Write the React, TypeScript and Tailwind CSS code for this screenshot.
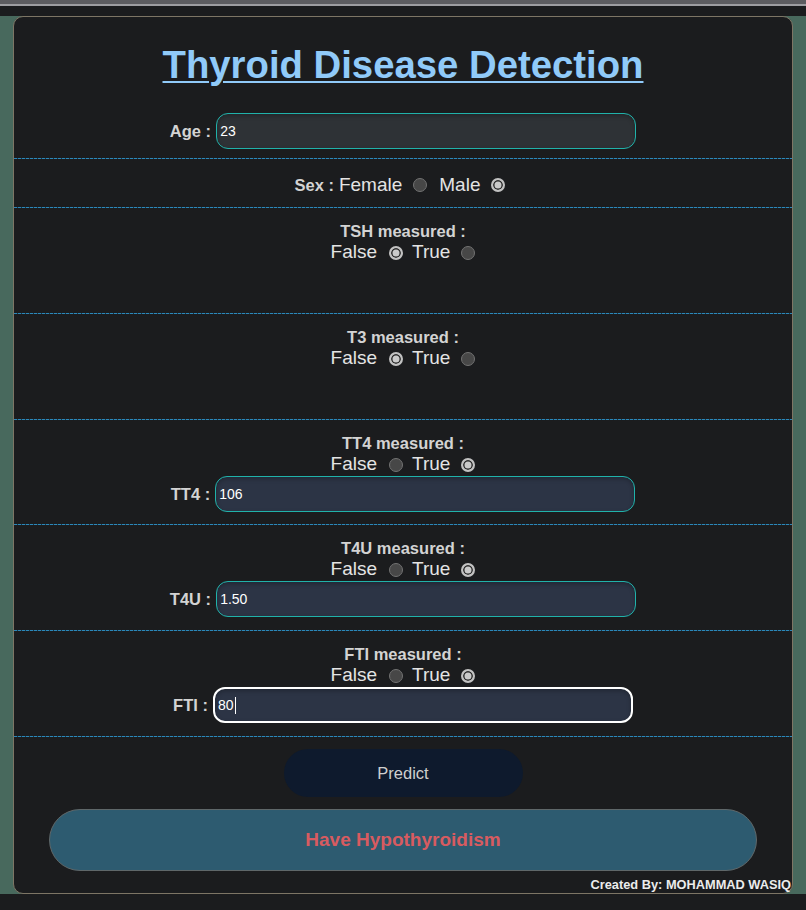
const font = { fontFamily: '"Liberation Sans", Arial, sans-serif' };

function Sep() {
  return <div className="h-[1px] shrink-0 bg-[repeating-linear-gradient(90deg,#2b88ba_0px,#2b88ba_3px,#1b3a4c_3px,#1b3a4c_4px)]" />;
}

function Radio({ checked }: { checked?: boolean }) {
  if (checked) {
    return (
      <span className="inline-block w-[14px] h-[14px] rounded-full border-2 border-[#c2c2c2] bg-[#cacaca] shadow-[inset_0_0_0_1.5px_#2b2b2b]" />
    );
  }
  return <span className="inline-block w-[14px] h-[14px] rounded-full border border-[#727272] bg-[#474747]" />;
}

function Choice({ a, b, first }: { a: string; b: string; first: boolean }) {
  return (
    <div className="flex items-center justify-center h-[23px] text-[19px] text-[#e4e4e4]">
      <span>{a}</span>
      <span className="ml-[12px] mr-[9px] flex"><Radio checked={first} /></span>
      <span>{b}</span>
      <span className="ml-[11px] flex"><Radio checked={!first} /></span>
    </div>
  );
}

function Field({ label, value, focused, blue }: { label: string; value: string; focused?: boolean; blue?: boolean }) {
  return (
    <div className="flex items-center justify-center">
      <span className="text-[16.5px] font-bold text-[#d3d3d3] mr-[5px]">{label} :</span>
      <div
        className={
          'w-[420px] h-[36px] rounded-[12px] flex items-center pl-[3px] text-[14px] text-white shadow-[inset_0_2px_4px_rgba(0,0,0,0.25)] ' +
          (focused ? 'border-2 border-white ' : 'border border-[#20b2aa] ') +
          (blue ? 'bg-[#2c3445]' : 'bg-[#2e3236]')
        }
      >
        {value}
        {focused && <span className="inline-block w-[1.5px] h-[17px] bg-white ml-[1px]" />}
      </div>
    </div>
  );
}

function Measured({ name, checked, field, short }: { name: string; checked: boolean; short?: boolean; field?: { label: string; value: string; focused?: boolean } }) {
  return (
    <>
      <div className={(short ? 'h-[104px] ' : 'h-[105px] ') + 'pt-[14px] flex flex-col'}>
        <div className="text-center text-[16.5px] leading-[19px] font-bold text-[#d3d3d3]">{name} measured :</div>
        <Choice a="False" b="True" first={!checked} />
        {field && <Field label={field.label} value={field.value} focused={field.focused} blue />}
      </div>
      <Sep />
    </>
  );
}

export default function App() {
  return (
    <div className="min-h-[910px] bg-[#1b1c1e]" style={font}>
      <div className="h-[4px] bg-[#5c5c60]" />
      <div className="h-[2px] bg-[#9d9da1]" />
      <div className="h-[10px]" />
      <div className="bg-[#48695d] px-[13px]">
        <div className="bg-[#1b1c1e] border border-[#7d7565] rounded-[10px] h-[878px] flex flex-col">
          <div className="pt-[26px] pb-[9px]">
            <h1 className="text-center text-[38.3px] leading-[44px] font-bold text-[#90caf9] underline underline-offset-[3px] decoration-[2px]">
              Thyroid Disease Detection
            </h1>
            <div className="mt-[26px]">
              <Field label="Age" value="23" />
            </div>
          </div>
          <Sep />

          <div className="h-[48px] pt-[15px] flex justify-center">
            <div className="flex items-center h-[22px] text-[19px] text-[#e4e4e4] -ml-[6px]">
              <span className="text-[16.5px] font-bold text-[#d3d3d3] mr-[5px]">Sex :</span>
              <span>Female</span>
              <span className="ml-[11px] mr-[12px] flex"><Radio /></span>
              <span>Male</span>
              <span className="ml-[11px] flex"><Radio checked /></span>
            </div>
          </div>
          <Sep />

          <Measured name="TSH" checked={false} />
          <Measured name="T3" checked={false} />
          <Measured name="TT4" checked short field={{ label: 'TT4', value: '106' }} />
          <Measured name="T4U" checked field={{ label: 'T4U', value: '1.50' }} />
          <Measured name="FTI" checked field={{ label: 'FTI', value: '80', focused: true }} />

          <div className="flex justify-center mt-[12px]">
            <button className="w-[239px] h-[48px] rounded-[24px] bg-[#0e1a2d] text-[16.5px] text-[#cfcfcf]">Predict</button>
          </div>

          <div className="mx-[35px] mt-[12px] h-[62px] rounded-[31px] bg-[#2d5b70] border border-[#5f6769] flex items-center justify-center text-[19px] font-bold text-[#d85b60]">
            Have Hypothyroidism
          </div>

          <div className="mt-auto text-right text-[12.8px] font-bold text-[#ececec] leading-[15px] pb-[1px] pr-[1px]">
            Created By: MOHAMMAD WASIQ
          </div>
        </div>
      </div>
    </div>
  );
}
